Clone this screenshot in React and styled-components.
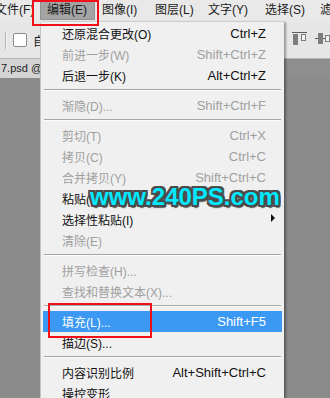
import React from "react";
import styled, { createGlobalStyle } from "styled-components";

const GlobalStyle = createGlobalStyle`
  html, body {
    margin: 0;
    padding: 0;
    overflow: hidden;
  }
  body {
    font-family: "Liberation Sans", "Noto Sans CJK SC", sans-serif;
  }
`;

const Screen = styled.div`
  position: relative;
  width: 330px;
  height: 398px;
  overflow: hidden;
  background: #8b8b8b;
  display: flex;
  flex-direction: column;
`;

const MenuBar = styled.div`
  display: flex;
  height: 22px;
  background: #e9e9e9;
  margin-left: -12px;
  flex-shrink: 0;
`;

const MenuBarItem = styled.div`
  box-sizing: border-box;
  width: ${(p) => p.width}px;
  height: 20px;
  padding-left: 7px;
  font-size: 12px;
  line-height: 20px;
  color: #1a1a1a;
  white-space: nowrap;
  flex-shrink: 0;
  background: ${(p) => (p.open ? "#a4a4a4" : "transparent")};
  box-shadow: ${(p) => (p.open ? "inset 0 0 0 1px #939393" : "none")};
`;

const Toolbar = styled.div`
  display: flex;
  align-items: center;
  height: 36px;
  background: #e6e6e6;
  border-bottom: 1px solid #b4b4b4;
  flex-shrink: 0;
`;

const ToolSep = styled.div`
  width: 1px;
  height: 17px;
  margin-left: 5px;
  background: #b3b3b3;
  border-right: 1px solid #fafafa;
`;

const CheckBox = styled.div`
  box-sizing: border-box;
  width: 14px;
  height: 14px;
  margin-left: 6px;
  background: #fff;
  border: 1px solid #8c8c8c;
  border-radius: 2px;
`;

const ToolLabel = styled.span`
  margin-left: 6px;
  font-size: 12px;
  color: #1a1a1a;
  white-space: nowrap;
`;

const ToolIcons = styled.div`
  margin-left: auto;
  display: flex;
  gap: 8px;
  align-items: center;
  margin-top: -2px;
`;

const TabBar = styled.div`
  display: flex;
  height: 19px;
  background: #8e8e8e;
  flex-shrink: 0;
`;

const DocTab = styled.div`
  padding: 0 8px 0 1px;
  background: #d4d4d4;
  font-size: 11px;
  line-height: 19px;
  color: #1e1e1e;
  white-space: nowrap;
`;

const Dropdown = styled.div`
  position: absolute;
  left: 40px;
  top: 22px;
  width: 244px;
  box-sizing: border-box;
  padding: 1px 2px 0 2px;
  background: #f0f0f0;
  border-left: 1px solid #c4c4c4;
  box-shadow: 2px 0 2px rgba(0, 0, 0, 0.35);
  height: 400px;
`;

const Row = styled.div`
  display: flex;
  align-items: center;
  height: 21px;
  padding: 0 16px 0 19px;
  font-size: 12px;
  white-space: nowrap;
  color: ${(p) => (p.active ? "#fff" : p.disabled ? "#a0a0a0" : "#111")};
  background: ${(p) => (p.active ? "#3c99f3" : "transparent")};
`;

const Label = styled.span`
  flex: 1;
`;

const Shortcut = styled.span`
  font-size: 13px;
`;

const SubArrow = styled.span`
  width: 0;
  height: 0;
  margin-right: -9px;
  margin-top: -4px;
  border-top: 4px solid transparent;
  border-bottom: 4px solid transparent;
  border-left: 4px solid #111;
`;

const Separator = styled.div`
  height: 9px;
  padding: 3px 1px 0;
  box-sizing: border-box;
  &::after {
    content: "";
    display: block;
    height: 1px;
    background: #a6a6a6;
    border-bottom: 1px solid #fbfbfb;
  }
`;

const Watermark = styled.div`
  position: absolute;
  left: 90px;
  top: 185px;
  font-family: "Liberation Sans", sans-serif;
  font-weight: bold;
  font-size: 24px;
  line-height: 24px;
  color: #00eaff;
  white-space: nowrap;
  text-shadow: -2px -2px 0 #4b4b4b, 2px -2px 0 #4b4b4b, -2px 2px 0 #4b4b4b,
    2px 2px 0 #4b4b4b, 0 -2px 0 #4b4b4b, 0 2px 0 #4b4b4b, -2px 0 0 #4b4b4b,
    2px 0 0 #4b4b4b, 1px 3px 1px #5a5a5a;
`;

const RedBox = styled.div`
  position: absolute;
  left: ${(p) => p.x}px;
  top: ${(p) => p.y}px;
  width: ${(p) => p.w}px;
  height: ${(p) => p.h}px;
  box-sizing: border-box;
  border: 2px solid #f0101a;
`;

const menuBarItems = [
  { label: "文件(F)", width: 52 },
  { label: "编辑(E)", width: 55, open: true },
  { label: "图像(I)", width: 53 },
  { label: "图层(L)", width: 53 },
  { label: "文字(Y)", width: 57 },
  { label: "选择(S)", width: 55 },
  { label: "滤镜(T)", width: 55 },
];

const menuItems = [
  { label: "还原混合更改(O)", key: "Ctrl+Z" },
  { label: "前进一步(W)", key: "Shift+Ctrl+Z", disabled: true },
  { label: "后退一步(K)", key: "Alt+Ctrl+Z" },
  { sep: true },
  { label: "渐隐(D)...", key: "Shift+Ctrl+F", disabled: true },
  { sep: true },
  { label: "剪切(T)", key: "Ctrl+X", disabled: true },
  { label: "拷贝(C)", key: "Ctrl+C", disabled: true },
  { label: "合并拷贝(Y)", key: "Shift+Ctrl+C", disabled: true },
  { label: "粘贴(P)" },
  { label: "选择性粘贴(I)", sub: true },
  { label: "清除(E)", disabled: true },
  { sep: true },
  { label: "拼写检查(H)...", disabled: true },
  { label: "查找和替换文本(X)...", disabled: true },
  { sep: true },
  { label: "填充(L)...", key: "Shift+F5", active: true },
  { label: "描边(S)..." },
  { sep: true },
  { label: "内容识别比例", key: "Alt+Shift+Ctrl+C" },
  { label: "操控变形" },
];

const AlignTopIcon = () => (
  <svg width="15" height="14" viewBox="0 0 15 14">
    <rect x="0" y="0" width="15" height="1" fill="#5c5c5c" />
    <rect x="1" y="2" width="5" height="11" fill="#7d7d7d" />
    <rect x="9.5" y="2.5" width="4" height="6" fill="#f4f4f4" stroke="#7d7d7d" />
  </svg>
);

const AlignMiddleIcon = () => (
  <svg width="15" height="14" viewBox="0 0 15 14">
    <rect x="0" y="6" width="15" height="1" fill="#5c5c5c" />
    <rect x="3" y="1" width="5" height="11" fill="#7d7d7d" />
    <rect x="10.5" y="3.5" width="4" height="6" fill="#f4f4f4" stroke="#7d7d7d" />
  </svg>
);

export default function App() {
  return (
    <Screen>
      <GlobalStyle />
      <MenuBar>
        {menuBarItems.map((m) => (
          <MenuBarItem key={m.label} width={m.width} open={m.open}>
            {m.label}
          </MenuBarItem>
        ))}
      </MenuBar>
      <Toolbar>
        <ToolSep />
        <CheckBox />
        <ToolLabel>自动选择：</ToolLabel>
        <ToolIcons>
          <AlignTopIcon />
          <AlignMiddleIcon />
        </ToolIcons>
      </Toolbar>
      <TabBar>
        <DocTab>7.psd @ 66.7% (图层 1, RGB/8)</DocTab>
      </TabBar>

      <Dropdown>
        {menuItems.map((item, i) =>
          item.sep ? (
            <Separator key={i} />
          ) : (
            <Row key={i} disabled={item.disabled} active={item.active}>
              <Label>{item.label}</Label>
              {item.key && <Shortcut>{item.key}</Shortcut>}
              {item.sub && <SubArrow />}
            </Row>
          )
        )}
      </Dropdown>

      <Watermark>www.240PS.com</Watermark>
      <RedBox x={32} y={0} w={67} h={26} />
      <RedBox x={48} y={303} w={104} h={35} />
    </Screen>
  );
}
